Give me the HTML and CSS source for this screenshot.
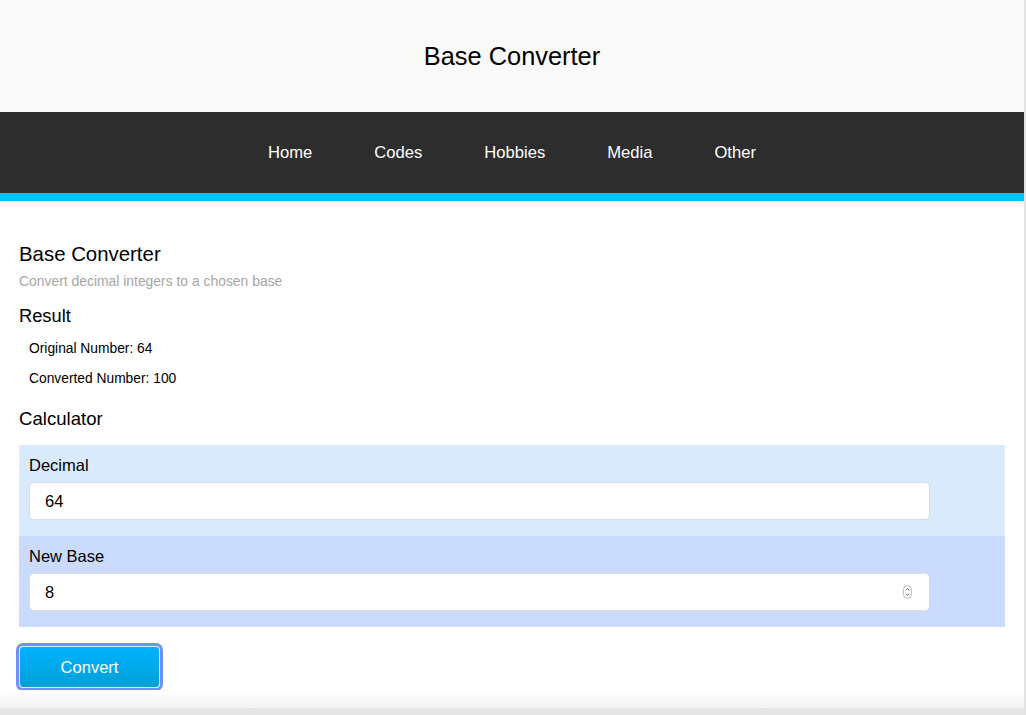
FILE: index.html
```html
<!DOCTYPE html>
<html lang="en">
<head>
<meta charset="utf-8">
<title>Base Converter</title>
<link rel="stylesheet" href="styles.css">
</head>
<body>
<div class="page">
  <header class="site-header">
    <h1 class="site-title">Base Converter</h1>
  </header>
  <nav class="site-nav">
    <a href="#" class="nav-link">Home</a>
    <a href="#" class="nav-link">Codes</a>
    <a href="#" class="nav-link">Hobbies</a>
    <a href="#" class="nav-link">Media</a>
    <a href="#" class="nav-link">Other</a>
  </nav>
  <div class="accent-bar"></div>
  <main class="content">
    <h2 class="page-title">Base Converter</h2>
    <p class="subtitle">Convert decimal integers to a chosen base</p>
    <h3 class="section-title">Result</h3>
    <p class="result-line">Original Number: 64</p>
    <p class="result-line">Converted Number: 100</p>
    <h3 class="section-title calc-title">Calculator</h3>
    <form class="calc">
      <div class="field field-a">
        <label class="field-label" for="dec">Decimal</label>
        <input class="field-input" id="dec" type="text" value="64">
      </div>
      <div class="field field-b">
        <label class="field-label" for="base">New Base</label>
        <div class="input-wrap">
          <input class="field-input" id="base" type="text" value="8">
          <span class="spinner">
            <svg width="9" height="14" viewBox="0 0 9 14">
              <rect x="0.5" y="0.5" width="8" height="13" rx="4" fill="#fff" stroke="#bbb"/>
              <path d="M2.8 5.3 L4.5 3.6 L6.2 5.3" fill="none" stroke="#555" stroke-width="0.9"/>
              <path d="M2.8 8.7 L4.5 10.4 L6.2 8.7" fill="none" stroke="#555" stroke-width="0.9"/>
            </svg>
          </span>
        </div>
      </div>
      <div class="actions">
        <button type="button" class="btn">Convert</button>
      </div>
    </form>
  </main>
  <footer class="site-footer"></footer>
</div>
</body>
</html>
```

FILE: styles.css
```css
html {
  background: #e3e3e3;
}
body {
  margin: 0 2px 0 0;
  background: #fff;
  font-family: "Liberation Sans", Arial, sans-serif;
  color: #000;
}
.page {
  min-height: 715px;
  display: flex;
  flex-direction: column;
}
.site-header {
  background: #f9f9f9;
  height: 112px;
  display: flex;
  align-items: center;
  justify-content: center;
}
.site-title {
  margin: 0;
  font-weight: normal;
  font-size: 25.4px;
  line-height: 30px;
}
.site-nav {
  background: #2d2d2d;
  height: 81px;
  display: flex;
  align-items: center;
  justify-content: center;
}
.nav-link {
  color: #fff;
  text-decoration: none;
  font-size: 16.6px;
  padding: 0 31px;
  line-height: 20px;
}
.accent-bar {
  height: 8px;
  background: #00c3ff;
}
.content {
  flex: 1;
  padding: 41px 19px 2px;
}
.page-title {
  margin: 0;
  font-weight: normal;
  font-size: 20.4px;
  line-height: 24px;
}
.subtitle {
  margin: 7px 0 0;
  font-size: 13.9px;
  line-height: 16px;
  color: #a6a6a6;
}
.section-title {
  margin: 16px 0 0;
  font-weight: normal;
  font-size: 18.3px;
  line-height: 22px;
}
.result-line {
  margin: 14px 0 0 10px;
  font-size: 13.8px;
  line-height: 16px;
}
.result-line + .result-line {
  margin-top: 14px;
}
.calc-title {
  margin-top: 21px;
  font-size: 18.6px;
}
.calc {
  margin-top: 15px;
}
.field {
  padding: 10px 10px 16px;
}
.field-a {
  background: #d9eafd;
}
.field-b {
  background: #cadbfd;
}
.field-label {
  display: block;
  font-size: 16.5px;
  line-height: 20px;
  margin-bottom: 7px;
}
.input-wrap {
  position: relative;
  width: 901px;
}
.field-input {
  box-sizing: border-box;
  display: block;
  width: 901px;
  height: 38px;
  border: 1px solid #dcdcdc;
  border-radius: 5px;
  background: #fff;
  padding: 0 15px;
  font-family: "Liberation Sans", Arial, sans-serif;
  font-size: 16.5px;
  color: #000;
  outline: none;
}
.spinner {
  position: absolute;
  right: 18px;
  top: 12px;
  width: 9px;
  height: 14px;
  display: block;
}
.spinner svg {
  display: block;
}
.actions {
  padding-top: 19px;
}
.btn {
  box-sizing: border-box;
  width: 141px;
  height: 42px;
  border: 1px solid #d6ecff;
  border-radius: 4px;
  outline: 3px solid #7090f8;
  outline-offset: 0;
  padding: 0;
  background: linear-gradient(to bottom, #00b3ff, #009fd4);
  color: #fff;
  font-family: "Liberation Sans", Arial, sans-serif;
  font-size: 16.5px;
  cursor: pointer;
}
.site-footer {
  height: 18px;
  background: linear-gradient(to bottom, #ffffff, #f3f3f3);
  border-bottom: 7px solid #e6e6e6;
}
```
